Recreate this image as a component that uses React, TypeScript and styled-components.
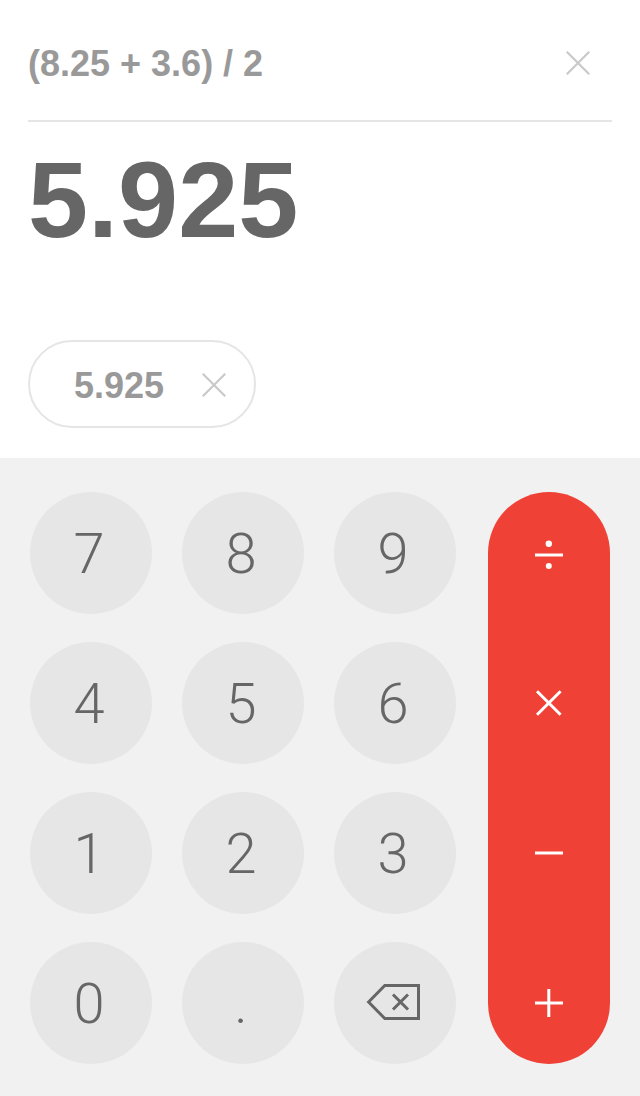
import React, { useState } from 'react';
import styled, { createGlobalStyle } from 'styled-components';

const Colors = {
  white: '#ffffff',
  panel: '#f1f1f1',
  key: '#e6e6e6',
  line: '#e5e5e5',
  icon: '#c9c9c9',
  textLight: '#999999',
  textDark: '#666666',
  red: '#ef4136',
};

const GlobalStyle = createGlobalStyle`
  * {
    box-sizing: border-box;
  }
  body {
    margin: 0;
    background-color: ${Colors.panel};
    font-family: 'Liberation Sans', Arial, sans-serif;
  }
  button, input {
    margin: 0;
    padding: 0;
    border: 0;
    background: none;
    font: inherit;
    color: inherit;
  }
  button {
    cursor: pointer;
  }
  svg {
    display: block;
  }
`;

const Display = styled.section`
  padding: 0 28px 30px;
  background-color: ${Colors.white};
`;

const ExpressionRow = styled.div`
  display: flex;
  align-items: center;
  padding: 42px 20px 36px 0;
  border-bottom: 2px solid ${Colors.line};
`;

const ExpressionInput = styled.input`
  flex: 1;
  min-width: 0;
  height: 42px;
  padding-top: 2px;
  color: ${Colors.textLight};
  font-size: 36px;
  font-weight: 700;
  line-height: 40px;
  outline: none;
`;

const Result = styled.output`
  display: block;
  margin-top: 18px;
  color: ${Colors.textDark};
  font-size: 108px;
  font-weight: 700;
  line-height: 120px;
`;

const History = styled.div`
  display: flex;
  margin-top: 80px;
`;

const Chip = styled.div`
  display: flex;
  align-items: center;
  gap: 36px;
  height: 88px;
  padding: 2px 26px 0 44px;
  border: 2px solid ${Colors.line};
  border-radius: 44px;
`;

const ChipValue = styled.button`
  padding-top: 2px;
  color: ${Colors.textLight};
  font-size: 36px;
  font-weight: 700;
  line-height: 40px;
`;

const Keypad = styled.section`
  display: flex;
  gap: 32px;
  padding: 34px 30px 32px;
  background-color: ${Colors.panel};
`;

const Keys = styled.div`
  flex: 1;
  display: grid;
  grid-template-columns: repeat(3, 122px);
  justify-content: space-between;
  row-gap: 28px;
`;

const Key = styled.button`
  display: flex;
  align-items: center;
  justify-content: center;
  height: 122px;
  padding: 2px 4px 0 0;
  border-radius: 50%;
  background-color: ${Colors.key};
  color: ${Colors.textDark};
  font-family: Roboto, sans-serif;
  font-size: 56px;
  font-weight: 300;
  line-height: 64px;
`;

const Operators = styled.div`
  display: flex;
  flex-direction: column;
  gap: 28px;
  width: 122px;
  border-radius: 61px;
  background-color: ${Colors.red};
`;

const Operator = styled.button`
  display: flex;
  align-items: center;
  justify-content: center;
  height: 122px;
  color: ${Colors.white};
`;

const ClearButton = styled.button`
  color: ${Colors.icon};
`;

const CrossIcon = () => (
  <svg width="28" height="28" viewBox="0 0 28 28" fill="none" stroke="currentColor" strokeWidth="2.2">
    <path d="M2.8 2.8 25.2 25.2M25.2 2.8 2.8 25.2" />
  </svg>
);

const BackspaceIcon = () => (
  <svg width="56" height="40" viewBox="0 0 56 40" fill="none" stroke="currentColor" strokeWidth="3">
    <path d="M53.5 1.5H19.8L3.6 18 19.8 34.5H53.5Z" />
    <path d="M28 10.5 43 25.5M43 10.5 28 25.5" />
  </svg>
);

const OperatorIcon = ({ children }: { children: React.ReactNode }) => (
  <svg width="32" height="32" viewBox="0 0 32 32" fill="none" stroke="currentColor" strokeWidth="3">
    {children}
  </svg>
);

const digits = ['7', '8', '9', '4', '5', '6', '1', '2', '3', '0', '.'];

const operators = [
  {
    sign: '/',
    label: 'Divide',
    icon: (
      <>
        <path d="M2 18H30" />
        <circle cx="15.8" cy="6.7" r="3.2" fill="currentColor" stroke="none" />
        <circle cx="15.8" cy="29" r="3" fill="currentColor" stroke="none" />
      </>
    ),
  },
  { sign: '*', label: 'Multiply', icon: <path d="M4 4.2 27.6 27.8M27.6 4.2 4 27.8" /> },
  { sign: '-', label: 'Subtract', icon: <path d="M2 16H30" /> },
  { sign: '+', label: 'Add', icon: <path d="M2 16H30M15.8 2V30" /> },
];

const App = () => {
  const [expression, setExpression] = useState('(8.25 + 3.6) / 2');
  const [history, setHistory] = useState(['5.925']);

  return (
    <main>
      <GlobalStyle />
      <Display>
        <ExpressionRow>
          <ExpressionInput
            aria-label="Expression"
            value={expression}
            onChange={(e) => setExpression(e.target.value)}
          />
          <ClearButton type="button" aria-label="Clear" onClick={() => setExpression('')}>
            <CrossIcon />
          </ClearButton>
        </ExpressionRow>
        <Result>5.925</Result>
        <History>
          {history.map((value) => (
            <Chip key={value}>
              <ChipValue type="button" onClick={() => setExpression(expression + value)}>
                {value}
              </ChipValue>
              <ClearButton
                type="button"
                aria-label="Remove"
                onClick={() => setHistory(history.filter((item) => item !== value))}
              >
                <CrossIcon />
              </ClearButton>
            </Chip>
          ))}
        </History>
      </Display>
      <Keypad>
        <Keys>
          {digits.map((digit) => (
            <Key key={digit} type="button" onClick={() => setExpression(expression + digit)}>
              {digit}
            </Key>
          ))}
          <Key type="button" aria-label="Backspace" onClick={() => setExpression(expression.slice(0, -1))}>
            <BackspaceIcon />
          </Key>
        </Keys>
        <Operators>
          {operators.map(({ sign, label, icon }) => (
            <Operator
              key={sign}
              type="button"
              aria-label={label}
              onClick={() => setExpression(`${expression} ${sign} `)}
            >
              <OperatorIcon>{icon}</OperatorIcon>
            </Operator>
          ))}
        </Operators>
      </Keypad>
    </main>
  );
};

export default App;
